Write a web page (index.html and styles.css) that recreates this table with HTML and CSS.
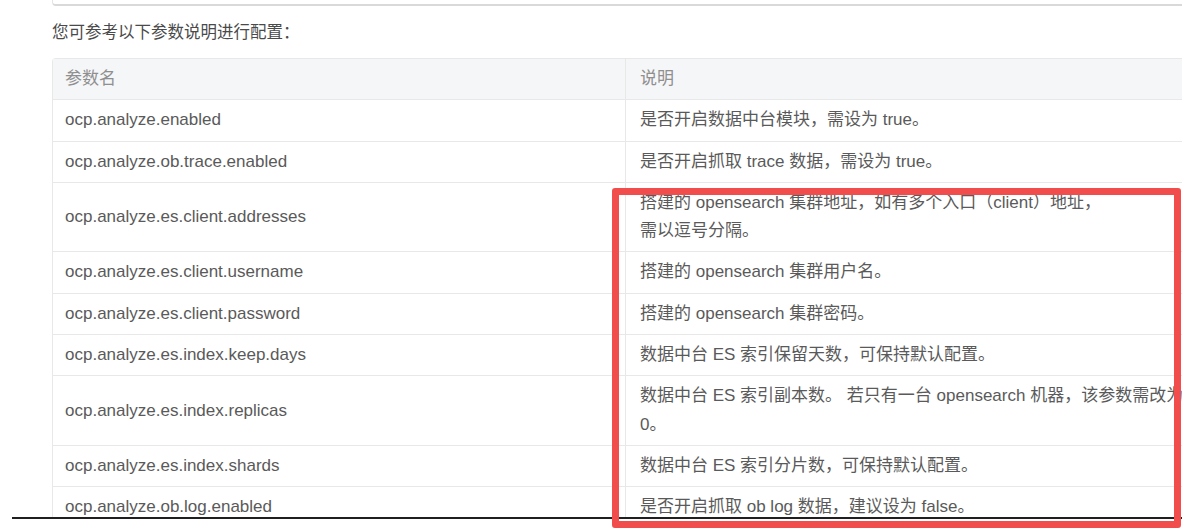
FILE: index.html
```html
<!DOCTYPE html>
<html lang="zh-CN">
<head>
<meta charset="utf-8">
<title>参数说明</title>
<link rel="stylesheet" href="styles.css">
</head>
<body>
<div class="frame">
  <div class="page">
    <div class="codebox"></div>
    <p class="intro">您可参考以下参数说明进行配置：</p>
    <table class="params">
      <thead>
        <tr><th class="name">参数名</th><th class="desc">说明</th></tr>
      </thead>
      <tbody>
        <tr><td class="name">ocp.analyze.enabled</td><td class="desc">是否开启数据中台模块，需设为 true。</td></tr>
        <tr><td class="name">ocp.analyze.ob.trace.enabled</td><td class="desc">是否开启抓取 trace 数据，需设为 true。</td></tr>
        <tr><td class="name">ocp.analyze.es.client.addresses</td><td class="desc">搭建的 opensearch 集群地址，如有多个入口（client）地址，<br>需以逗号分隔。</td></tr>
        <tr><td class="name">ocp.analyze.es.client.username</td><td class="desc">搭建的 opensearch 集群用户名。</td></tr>
        <tr><td class="name">ocp.analyze.es.client.password</td><td class="desc">搭建的 opensearch 集群密码。</td></tr>
        <tr><td class="name">ocp.analyze.es.index.keep.days</td><td class="desc">数据中台 ES 索引保留天数，可保持默认配置。</td></tr>
        <tr><td class="name">ocp.analyze.es.index.replicas</td><td class="desc">数据中台 ES 索引副本数。 若只有一台 opensearch 机器，该参数需改为<br>0。</td></tr>
        <tr><td class="name">ocp.analyze.es.index.shards</td><td class="desc">数据中台 ES 索引分片数，可保持默认配置。</td></tr>
        <tr><td class="name">ocp.analyze.ob.log.enabled</td><td class="desc">是否开启抓取 ob log 数据，建议设为 false。</td></tr>
      </tbody>
    </table>
  </div>
</div>
<div class="cutline"></div>
<div class="highlight"></div>
</body>
</html>
```

FILE: styles.css
```css
html, body {
  margin: 0;
  padding: 0;
  width: 1182px;
  height: 530px;
  overflow: hidden;
  background: #ffffff;
}

body {
  position: relative;
  font-family: "Liberation Sans", "Noto Sans CJK SC", sans-serif;
  color: #5a5a5a;
}

.frame {
  height: 517px;
  overflow: hidden;
}

.page {
  padding-left: 52px;
}

.codebox {
  height: 4px;
  margin-right: -40px;
  border: 1px solid #e4e4e4;
  border-top: none;
  border-bottom: 2px solid #d9d9d9;
  border-radius: 0 0 4px 4px;
}

.intro {
  margin: 14px 0 14px;
  font-size: 16.5px;
  line-height: 24px;
  color: #4a4a4a;
}

.params {
  border-collapse: separate;
  border-spacing: 0;
  width: 1180px;
  border: 1px solid #e8e8e8;
  border-bottom: none;
  border-radius: 4px 4px 0 0;
  font-size: 17px;
  table-layout: fixed;
}

.params th,
.params td {
  padding: 6px 12px;
  line-height: 28.3px;
  text-align: left;
  vertical-align: middle;
  border-bottom: 1px solid #e8e8e8;
  white-space: nowrap;
}

.params th {
  background: #f5f6f8;
  font-weight: normal;
  color: #8f8f8f;
}

.params .name {
  width: 548px;
}

.params .desc {
  padding-left: 14px;
  border-left: 1px solid #e8e8e8;
}

.cutline {
  height: 2px;
  margin-left: 12px;
  background: #1f1f1f;
}

.highlight {
  position: absolute;
  left: 612px;
  top: 188px;
  width: 569px;
  height: 340px;
  box-sizing: border-box;
  border: 7px solid #f24d4d;
  border-radius: 3px;
}
```
